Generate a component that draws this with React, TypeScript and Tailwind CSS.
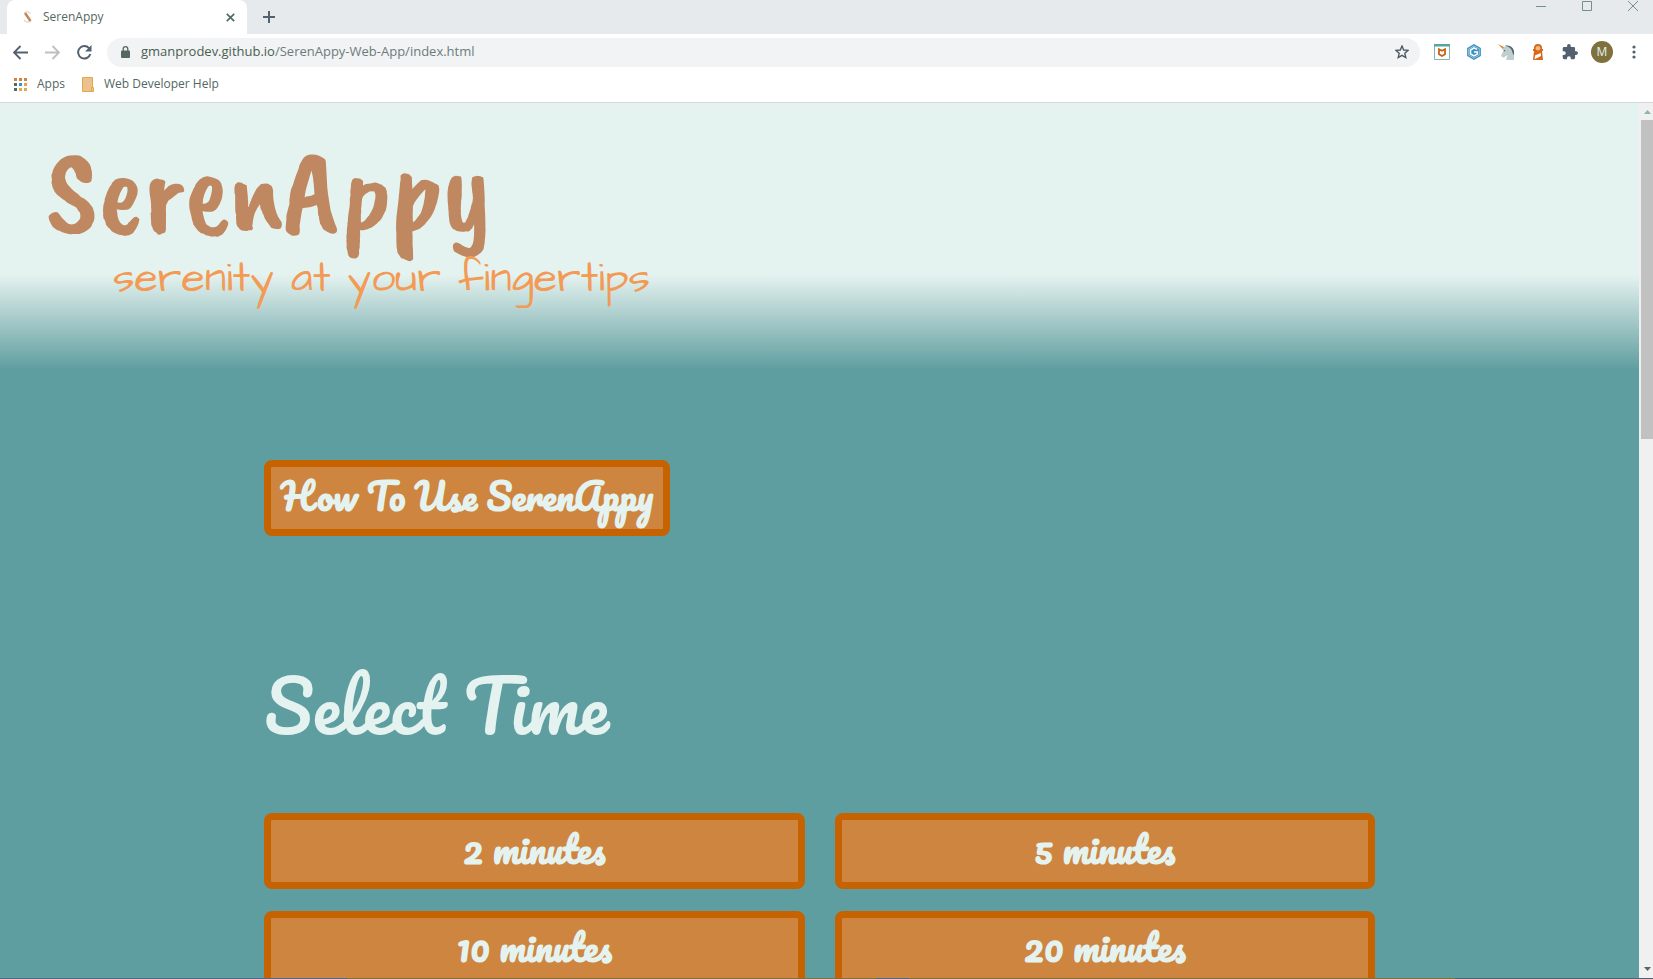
import React from "react";

const times = ["2 minutes", "5 minutes", "10 minutes", "20 minutes"];

const scriptFont = "font-['Pacifico','Lato',cursive] text-[#e5f3f0]";
const boxed =
  "rounded-lg border-[7px] border-[#c66300] bg-[#cd853f] h-[76px] flex items-center justify-center pb-[5px] text-4xl font-bold";

function TabStrip() {
  return (
    <div className="flex h-[34px] shrink-0 bg-[#e6eaed]">
      <div className="ml-[7px] flex h-full w-60 items-center rounded-t-lg bg-white pl-4 pr-3">
        <svg width="10" height="12" viewBox="0 0 10 12" fill="none" aria-hidden="true">
          <path d="M2 2 L7.500 10" stroke="#c08860" strokeWidth="2.500" />
          <path d="M1.500 1.500 Q5 -.5 7.500 2.500 M1 9 Q3 12 8 10.500" stroke="#dcc4a0" />
        </svg>
        <span className="ml-[10px] flex-1 text-xs text-[#53685f]">SerenAppy</span>
        <button aria-label="Close tab" className="text-[#4f6b66]">
          <svg width="9" height="9" viewBox="0 0 9 9" stroke="currentColor" strokeWidth="1.700">
            <path d="M.8.8l7.400 7.400M8.200.8L.8 8.200" />
          </svg>
        </button>
      </div>
      <button aria-label="New tab" className="ml-4 text-[#536070]">
        <svg width="12" height="12" viewBox="0 0 12 12" stroke="currentColor" strokeWidth="2">
          <path d="M6 0v12M0 6h12" />
        </svg>
      </button>
      <div className="ml-auto flex gap-9 pr-[15px] pt-px text-[#71908f]">
        <button aria-label="Minimize" className="h-[10px]">
          <svg width="10" height="10" viewBox="0 0 10 10" stroke="currentColor"><path d="M0 5.500h10" /></svg>
        </button>
        <button aria-label="Maximize" className="h-[10px]">
          <svg width="10" height="10" viewBox="0 0 10 10" stroke="currentColor" fill="none"><path d="M.5.5h9v9h-9z" /></svg>
        </button>
        <button aria-label="Close window" className="h-[10px]">
          <svg width="10" height="10" viewBox="0 0 10 10" stroke="currentColor"><path d="M0 0l10 10M10 0L0 10" /></svg>
        </button>
      </div>
    </div>
  );
}

function Toolbar() {
  return (
    <div className="flex h-9 shrink-0 items-center bg-white pl-[13px] pr-[17px]">
      <div className="flex w-[94px] gap-[17px] text-[#536070]">
        <button aria-label="Back">
          <svg width="15" height="15" viewBox="0 0 15 15" fill="none" stroke="currentColor" strokeWidth="1.900"><path d="M15 7.500H1.500M7.500 1L1 7.500l6.500 6.500" /></svg>
        </button>
        <button aria-label="Forward" className="text-[#c0bfbd]">
          <svg width="15" height="15" viewBox="0 0 15 15" fill="none" stroke="currentColor" strokeWidth="1.900"><path d="M0 7.500h13.500M7.500 1L14 7.500 7.500 14" /></svg>
        </button>
        <button aria-label="Reload">
          <svg width="15" height="15" viewBox="0 0 15 15" fill="none" stroke="currentColor" strokeWidth="2"><path d="M13.300 9A6.200 6.200 0 1 1 12 3.200" /><path d="M14.500 0v6.500H8z" fill="currentColor" stroke="none" /></svg>
        </button>
      </div>
      <div className="flex h-[29px] flex-1 items-center rounded-full bg-[#f1f3f5] pl-[14px] pr-[11px]">
        <svg width="9" height="12" viewBox="0 0 9 12" aria-hidden="true"><path d="M2.200 5V3a2.300 2.300 0 0 1 4.600 0v2" fill="none" stroke="#53685f" strokeWidth="1.300" /><rect y="4.500" width="9" height="7.500" rx="1" fill="#53685f" /></svg>
        <a href="#page" className="ml-[11px] text-[13px] text-[#6c7c78]">
          <span className="text-[#48604f]">gmanprodev.github.io</span>/SerenAppy-Web-App/index.html
        </a>
        <button aria-label="Bookmark this page" className="ml-auto text-[#4d5a66]">
          <svg width="14" height="14" viewBox="0 0 14 14" fill="none" stroke="currentColor" strokeWidth="1.400"><path d="M7 1l1.700 4 4.300.4-3.200 2.900 1 4.300L7 10.400l-3.800 2.200 1-4.300L1 5.400 5.300 5z" /></svg>
        </button>
      </div>
      <div className="ml-[14px] flex items-center gap-4">
        <button aria-label="Web protection">
          <svg width="16" height="16" viewBox="0 0 16 16"><path d="M.5.5h15v15H.5z" fill="#fff" stroke="#82b5ad" /><path d="M0 0h16v2.500H0z" fill="#55a79c" /><path d="M5 5.200l3 1.600 3-1.600v5L8 12l-3-1.800z" fill="none" stroke="#c66315" strokeWidth="1.800" /></svg>
        </button>
        <button aria-label="Code extension">
          <svg width="16" height="16" viewBox="0 0 16 16"><path d="M8 0l6.900 4v8L8 16l-6.900-4V4z" fill="#3d94c4" /><path d="M8 1.900l5.300 3v6.200L8 14.100l-5.300-3V4.900z" fill="none" stroke="#b9d9e8" strokeWidth=".7" /><path d="M11 5.400L8 3.900 4.500 6v4L8 12l3.300-1.900V8H8" fill="none" stroke="#fff" strokeWidth="1.500" /></svg>
        </button>
        <button aria-label="Unicorn extension">
          <svg width="16" height="16" viewBox="0 0 16 16"><path d="M7 1.800c5-1.300 9 2.200 9 6.200v4l-3-5-4-4z" fill="#536070" /><path d="M4.500 3.500L8 2.300c4 .4 6.500 4 6.500 7L16 12v4H8l1.500-5-4 2.700L3 12l2-4.500z" fill="#bfcfce" /><path d="M0 0l6 3-1.300 2z" fill="#df873e" /><path d="M6 6h1.200v1.200H6z" fill="#53685f" /></svg>
        </button>
        <button aria-label="Lighthouse">
          <svg width="16" height="16" viewBox="0 0 16 16"><path d="M8 0q4 0 4 4v1h1v2h-1l1 9H3l1-9H3V5h1V4q0-4 4-4z" fill="#d8691b" /><circle cx="8" cy="4.300" r="2.300" fill="#efbd81" /><path d="M5 11.500l5.700-2.500.3 3-6.300 3.200z" fill="#fff" /></svg>
        </button>
        <button aria-label="Extensions" className="text-[#536070]">
          <svg width="16" height="16" viewBox="1 1 22 22" fill="currentColor"><path d="M20.500 11H19V7a2 2 0 0 0-2-2h-4V3.500a2.500 2.500 0 0 0-5 0V5H4a2 2 0 0 0-2 2v3.800h1.500a2.700 2.700 0 0 1 0 5.400H2V20c0 1.100.9 2 2 2h3.800v-1.500a2.700 2.700 0 0 1 5.400 0V22H17a2 2 0 0 0 2-2v-4h1.500a2.500 2.500 0 0 0 0-5z" /></svg>
        </button>
        <button aria-label="Profile M" className="-mx-[3px] flex size-[22px] items-center justify-center rounded-full bg-[#7e713e] text-xs font-medium text-[#e5f3f0]">M</button>
        <button aria-label="Menu" className="ml-[6px] text-[#536070]">
          <svg width="4" height="14" viewBox="0 0 4 14" fill="currentColor"><circle cx="2" cy="2" r="1.600" /><circle cx="2" cy="7" r="1.600" /><circle cx="2" cy="12" r="1.600" /></svg>
        </button>
      </div>
    </div>
  );
}

const appDots = ["#d9803c", "#d9803c", "#d9803c", "#53685f", "#3d94c4", "#f39a55", "#53685f", "#e0ab45", "#e0ab45"];

function Bookmarks() {
  return (
    <nav className="flex h-[33px] shrink-0 items-start border-b border-[#d3d7dc] bg-white pl-[14px] pt-[6px] text-xs text-[#53685f]">
      <a href="#apps" className="flex items-center gap-[10px]">
        <svg width="13" height="13" viewBox="0 0 13 13" aria-hidden="true">
          {appDots.map((fill, i) => (
            <rect key={i} x={(i % 3) * 5} y={Math.floor(i / 3) * 5} width="3" height="3" fill={fill} />
          ))}
        </svg>
        Apps
      </a>
      <a href="#help" className="ml-[17px] flex items-center gap-[10px]">
        <svg width="12" height="15" viewBox="0 0 12 15" aria-hidden="true">
          <path d="M.5.5h10v14H.5z" fill="#ebc190" stroke="#e0ab45" />
          <path d="M9.500 10.500h2v4h-2z" fill="#ebc190" stroke="#e0ab45" />
        </svg>
        Web Developer Help
      </a>
    </nav>
  );
}

function Page() {
  return (
    <main id="page" className="min-w-0 flex-1 overflow-hidden bg-[#5f9ea0]">
      <header className="h-[272px] bg-linear-to-b from-[#e5f3f0] from-[63%] to-[#5f9ea0] to-[98%] pl-[46px] pt-8">
        <h1 className="font-['Caveat_Brush','Lato',cursive] text-[120px] leading-[112px] text-[#c08860]">SerenAppy</h1>
        <p className="mt-2 pl-[67px] font-['Architects_Daughter','Lato',cursive] text-[43px] leading-[48px] text-[#f39a55]">serenity at your fingertips</p>
      </header>
      <div className="mx-auto max-w-[1111px] pt-[85px]">
        <a href="#how-to" className={`${boxed} ${scriptFont} w-[406px]`}>How To Use SerenAppy</a>
        <h2 className={`${scriptFont} mt-[122px] text-[70px] leading-[96px]`}>Select Time</h2>
        <div className="mt-[59px] grid grid-cols-2 gap-x-[30px] gap-y-[22px]">
          {times.map((t) => (
            <button key={t} className={`${boxed} ${scriptFont}`}>{t}</button>
          ))}
        </div>
      </div>
    </main>
  );
}

function ScrollTrack() {
  return (
    <div aria-hidden="true" className="flex w-[14px] flex-col items-center bg-[#f0f0f0] pl-[2px] pt-[7px] pb-[7px]">
      <svg width="7" height="4" viewBox="0 0 7 4" fill="#8bb5a5"><path d="M0 4l3.500-4L7 4z" /></svg>
      <div className="mt-[6px] h-[37%] w-full bg-[#c1c1c1]" />
      <svg className="mt-auto" width="7" height="4" viewBox="0 0 7 4" fill="#53685f"><path d="M0 0l3.500 4L7 0z" /></svg>
    </div>
  );
}

export default function App() {
  return (
    <div className="flex h-screen flex-col overflow-hidden font-['Segoe_UI','Open_Sans',sans-serif]">
      <TabStrip />
      <Toolbar />
      <Bookmarks />
      <div className="flex min-h-0 flex-1">
        <Page />
        <ScrollTrack />
      </div>
      <div aria-hidden="true" className="flex h-px shrink-0 bg-[#7e713e]">
        <div className="w-[21%] bg-[#536888]" />
        <div className="ml-[32%] w-[2%] bg-[#536888]" />
        <div className="ml-auto w-[12%] bg-[#536070]" />
      </div>
    </div>
  );
}
